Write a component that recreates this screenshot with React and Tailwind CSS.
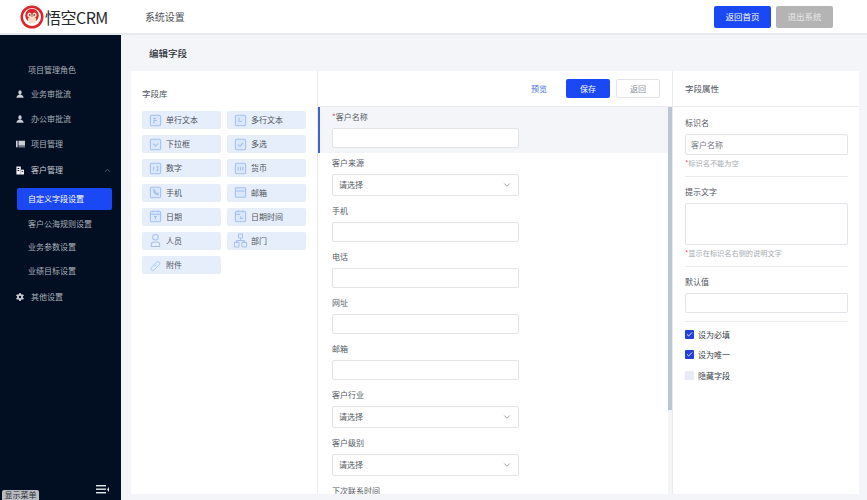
import React from "react";
import { ChevronDown, ChevronUp, Check } from "lucide-react";

const font = { fontFamily: '"Noto Sans CJK SC", "Noto Sans", sans-serif' };

// small pale-blue field type icons
const FieldIcon = ({ type }) => {
  const c = "#a3c0ee";
  const box = <rect x="2.500" y="2.500" width="11" height="11" rx="1.500" fill="#dbe7fa" />;
  const shapes = {
    text: <>{box}<path d="M5.500 6h3M5.500 8h4M5.500 10h2" /></>,
    multi: <>{box}<path d="M6.500 5v4h3" /></>,
    select: <>{box}<path d="M5.500 7l2.500 2.500L10.500 7" /></>,
    check: <>{box}<path d="M5.500 8l2 2 3-4" /></>,
    number: <>{box}<path d="M6 6v4M9 6h1.500v4H9" /></>,
    money: <>{box}<path d="M5.500 6v4M8 6v4M10.500 6v4" /></>,
    phone: <>{box}<path d="M6 5c0 3 2 5 5 5.500l-.5-1.800-1.500.3-1.500-1.500.3-1.500z" /></>,
    mail: <><rect x="2.500" y="3" width="11" height="10" rx="1" fill="#dbe7fa" /><path d="M2.500 6.500h11" /></>,
    date: <>{box}<path d="M2.500 5.500h11M5.500 1.500v2M10.500 1.500v2M6.500 8h3M8 8v3" /></>,
    datetime: <>{box}<path d="M2.500 5.500h5M5.500 1.500v2M10.500 1.500v2M8 8v2h2.500" /></>,
    person: <><circle cx="8" cy="4.500" r="3" /><path d="M3.500 14.500v-2a3 3 0 0 1 3-3h3a3 3 0 0 1 3 3v2z" /></>,
    dept: <><rect x="5.800" y="1" width="4.400" height="4.400" rx="1" /><rect x="1.500" y="10" width="5" height="5" rx="1" /><rect x="9.500" y="10" width="5" height="5" rx="1" /><path d="M8 5.400V8M4 10V8h8v2" /></>,
    attach: <g transform="translate(1.600 1.600) scale(0.8)"><path d="M2.500 10.500l7-7a2.500 2.500 0 0 1 3.500 0 2.500 2.500 0 0 1 0 3.500l-7 7a2 2 0 0 1-3.500-3.500z" /><path d="M6.500 9.500l2.500-2.500" /></g>,
  };
  return (
    <svg width="15" height="15" viewBox="0 0 16 16" fill="none" stroke={c} strokeWidth="1.100" className="shrink-0">
      {shapes[type]}
    </svg>
  );
};

const fieldLib = [
  ["单行文本", "text"],
  ["多行文本", "multi"],
  ["下拉框", "select"],
  ["多选", "check"],
  ["数字", "number"],
  ["货币", "money"],
  ["手机", "phone"],
  ["邮箱", "mail"],
  ["日期", "date"],
  ["日期时间", "datetime"],
  ["人员", "person"],
  ["部门", "dept"],
  ["附件", "attach"],
];

const SideIcon = ({ kind }) => {
  if (kind === "user")
    return (
      <svg width="8" height="8" viewBox="0 0 10 10" fill="#c9ced6">
        <path d="M3 2.500a2 2.300 0 0 1 4 0v1a2 2.300 0 0 1-4 0z" />
        <path d="M3.500 6h3l2.500 1.500V9H1V7.500z" />
        <rect x="0.500" y="9.200" width="9" height="0.800" />
      </svg>
    );
  if (kind === "gear")
    return (
      <svg width="8" height="8" viewBox="0 0 10 10">
        <g fill="#c9ced6">
          <circle cx="5" cy="5" r="3.600" />
          <rect x="4" y="0" width="2" height="10" />
          <rect x="4" y="0" width="2" height="10" transform="rotate(60 5 5)" />
          <rect x="4" y="0" width="2" height="10" transform="rotate(120 5 5)" />
        </g>
        <circle cx="5" cy="5" r="1.500" fill="#020f22" />
      </svg>
    );
  if (kind === "book")
    return (
      <svg width="9" height="8" viewBox="0 0 11 9" fill="#c9ced6">
        <rect x="0" y="0.500" width="2" height="8" />
        <rect x="3" y="0.500" width="8" height="6" />
        <rect x="3" y="7.500" width="8" height="1" />
      </svg>
    );
  return (
    <svg width="8" height="9" viewBox="0 0 10 10" fill="#eef0f3">
      <path d="M0.500 0h5.500v10H0.500z" />
      <path d="M6 4h4v6H6z" />
      <path d="M2 2h2v1H2zM2 4.500h2v1H2zM7 6h2v1H7z" fill="#020f22" />
    </svg>
  );
};

const Label = ({ children, required }) => (
  <div className="text-[8px] leading-[12px] text-[#555b66]">
    {required && <span className="text-[#e0364c]">*</span>}
    {children}
  </div>
);

const FormField = ({ label, select, required, active, className }) => (
  <div className={`${active ? "bg-[#f3f5f9] border-l-2 border-[#3f62d8] pl-[12px] pt-[4px] pb-[5px] mr-[4px]" : "pl-[14px]"} ${className || ""}`}>
    <Label required={required}>{label}</Label>
    <div className={`mt-[5px] w-[187px] ${select ? "h-[22px]" : "h-[20px]"} bg-white border border-[#e2e4e9] rounded-[2px] flex items-center justify-between px-[6px] text-[8px] text-[#555b66]`}>
      {select && <span>请选择</span>}
      {select && <ChevronDown size={10} className="text-[#8a8f99]" />}
    </div>
  </div>
);

export default function App() {
  return (
    <div style={font} className="w-[867px] h-[500px] overflow-hidden flex flex-col bg-[#f3f5f9]">
      {/* top bar */}
      <header className="h-[35px] shrink-0 bg-white border-b-2 border-[#e8e9ec] flex items-center pl-[20px] pr-[34px]">
        <svg width="24" height="24" viewBox="0 0 24 24" className="shrink-0">
          <circle cx="12" cy="12" r="11.500" fill="#d8262c" />
          <circle cx="12" cy="12" r="9" fill="#fff" />
          <circle cx="12" cy="10.500" r="6.800" fill="#d8262c" />
          <ellipse cx="9.500" cy="10" rx="2.200" ry="2.500" fill="#f6dcc6" />
          <ellipse cx="14.500" cy="10" rx="2.200" ry="2.500" fill="#f6dcc6" />
          <ellipse cx="12" cy="15" rx="4.200" ry="3.500" fill="#f6dcc6" />
          <circle cx="9.800" cy="10" r="0.800" fill="#222" />
          <circle cx="14.200" cy="10" r="0.800" fill="#222" />
        </svg>
        <span className="ml-[1px] text-[16px] tracking-[-0.5px] text-[#26282c]">悟空CRM</span>
        <span className="ml-[37px] text-[10px] text-[#50545c]">系统设置</span>
        <button className="ml-auto w-[57px] h-[22px] rounded-[2px] bg-[#1a48f5] text-white text-[8.500px]">返回首页</button>
        <button className="ml-[5px] w-[57px] h-[22px] rounded-[2px] bg-[#b4b4b4] text-[#e6e6e6] text-[8.500px]">退出系统</button>
      </header>

      <div className="flex-1 flex min-h-0">
        {/* sidebar */}
        <aside className="relative w-[121px] shrink-0 bg-[#020f22] text-[8px] text-[#a9afb9] pt-[26px]">
          <div className="pl-[28px] h-[18px] flex items-center">项目管理角色</div>
          <div className="pl-[16px] h-[25px] mt-[2px] flex items-center gap-[7px]"><SideIcon kind="user" /><span>业务审批流</span></div>
          <div className="pl-[16px] h-[25px] flex items-center gap-[7px]"><SideIcon kind="user" /><span>办公审批流</span></div>
          <div className="pl-[16px] h-[26px] flex items-center gap-[6px]"><SideIcon kind="book" /><span>项目管理</span></div>
          <div className="pl-[16px] pr-[9px] h-[26px] flex items-center gap-[7px] text-[#c9ced6]">
            <SideIcon kind="building" /><span>客户管理</span>
            <ChevronUp size={9} className="ml-auto text-[#5d6675]" />
          </div>
          <div className="ml-[17px] mt-[5px] w-[95px] h-[22px] rounded-[2px] bg-[#1a48f5] text-white pl-[11px] flex items-center">自定义字段设置</div>
          <div className="pl-[28px] h-[24px] mt-[2px] flex items-center">客户公海规则设置</div>
          <div className="pl-[28px] h-[22px] flex items-center">业务参数设置</div>
          <div className="pl-[28px] h-[26px] flex items-center">业绩目标设置</div>
          <div className="pl-[16px] h-[25px] flex items-center gap-[7px]"><SideIcon kind="gear" /><span>其他设置</span></div>

          <svg width="14" height="9" viewBox="0 0 14 9" fill="#e6e8ec" className="absolute left-[96px] bottom-[6px]">
            <rect x="0" y="0" width="10" height="1.400" />
            <rect x="0" y="3.500" width="10" height="1.400" />
            <rect x="0" y="7" width="10" height="1.400" />
            <path d="M13 2v5l-2-2.500z" />
          </svg>
          <div className="absolute left-[2px] bottom-0 w-[37px] h-[10px] rounded-t-[2px] bg-[#b9bdc2] text-[#2c2f33] text-[8px] leading-[10px] text-center overflow-hidden">显示菜单</div>
        </aside>

        {/* main area */}
        <main className="flex-1 min-w-0 flex flex-col">
          <div className="h-[36px] shrink-0 pl-[28px] flex items-center text-[9.500px] font-medium text-[#2f333a]">编辑字段</div>
          <div className="ml-[10px] mr-[8px] mb-[6px] flex-1 min-h-0 flex bg-white">
            {/* field library */}
            <section className="w-[187px] shrink-0 border-r border-[#e9ebef] pl-[11px]">
              <div className="mt-[16px] text-[8.500px] leading-[13px] text-[#50545c]">字段库</div>
              <div className="mt-[11px] grid grid-cols-[79px_79px] gap-x-[6px] gap-y-[6.200px]">
                {fieldLib.map(([name, type]) => (
                  <div key={name} className="h-[18px] rounded-[2px] bg-[#e6eefb] pl-[6px] flex items-center gap-[3px] text-[8px] text-[#50545c]">
                    <FieldIcon type={type} />
                    <span>{name}</span>
                  </div>
                ))}
              </div>
            </section>

            {/* form preview */}
            <section className="w-[354px] shrink-0 flex flex-col min-h-0">
              <div className="h-[36px] shrink-0 border-b border-[#e9ebef] flex items-center justify-end pr-[12px]">
                <span className="text-[8px] text-[#4a6fe0]">预览</span>
                <button className="ml-[19px] w-[44px] h-[19px] rounded-[2px] bg-[#1a48f5] text-white text-[8px]">保存</button>
                <button className="ml-[6px] w-[44px] h-[19px] rounded-[2px] border border-[#e2e4e9] bg-white text-[#8a8f99] text-[8px]">返回</button>
              </div>
              <div className="relative flex-1 min-h-0 overflow-hidden">
                <FormField label="客户名称" required active />
                <FormField label="客户来源" select className="mt-[4px]" />
                <FormField label="手机" className="mt-[9px]" />
                <FormField label="电话" className="mt-[9px]" />
                <FormField label="网址" className="mt-[9px]" />
                <FormField label="邮箱" className="mt-[9px]" />
                <FormField label="客户行业" select className="mt-[9px]" />
                <FormField label="客户级别" select className="mt-[9px]" />
                <div className="pl-[14px] mt-[9px]"><Label>下次联系时间</Label></div>
                {/* scrollbar */}
                <div className="absolute right-0 top-0 bottom-0 w-[4px] bg-[#f3f4f6]">
                  <div className="h-[303px] bg-[#bcc6d2]" />
                </div>
              </div>
            </section>

            {/* field props */}
            <section className="flex-1 min-w-0 border-l border-[#e9ebef] flex flex-col">
              <div className="h-[36px] shrink-0 border-b border-[#e9ebef] pl-[12px] flex items-center text-[8.500px] text-[#50545c]">字段属性</div>
              <div className="pl-[12px] pr-[11px] pt-[10px] text-[8px] text-[#50545c]">
                <div className="leading-[12px]">标识名</div>
                <div className="mt-[5px] h-[21px] border border-[#e2e4e9] rounded-[2px] pl-[5px] flex items-center text-[#777c85]">客户名称</div>
                <div className="mt-[3px] text-[7.200px] leading-[11px] text-[#a5a9b0]"><span className="text-[#e0364c]">*</span>标识名不能为空</div>
                <div className="mt-[7px] h-px bg-[#e9ebef]" />
                <div className="mt-[9px] leading-[12px]">提示文字</div>
                <div className="mt-[5px] h-[42px] border border-[#e2e4e9] rounded-[2px]" />
                <div className="mt-[3px] text-[7.200px] leading-[11px] text-[#a5a9b0]"><span className="text-[#e0364c]">*</span>显示在标识名右侧的说明文字</div>
                <div className="mt-[7px] h-px bg-[#e9ebef]" />
                <div className="mt-[9px] leading-[12px]">默认值</div>
                <div className="mt-[5px] h-[20px] border border-[#e2e4e9] rounded-[2px]" />
                <div className="mt-[8px] h-px bg-[#e9ebef]" />
                <div className="mt-[8px] h-[9px] flex items-center gap-[4px] text-[#3a3e45]">
                  <span className="w-[9px] h-[9px] rounded-[1px] bg-[#2340d8] flex items-center justify-center"><Check size={7} color="#fff" strokeWidth={3} /></span>
                  <span>设为必填</span>
                </div>
                <div className="mt-[11px] h-[9px] flex items-center gap-[4px] text-[#3a3e45]">
                  <span className="w-[9px] h-[9px] rounded-[1px] bg-[#2340d8] flex items-center justify-center"><Check size={7} color="#fff" strokeWidth={3} /></span>
                  <span>设为唯一</span>
                </div>
                <div className="mt-[12px] h-[9px] flex items-center gap-[4px] text-[#3a3e45]">
                  <span className="w-[9px] h-[9px] rounded-[1px] bg-[#e8ebf3]" />
                  <span>隐藏字段</span>
                </div>
              </div>
            </section>
          </div>
        </main>
      </div>
    </div>
  );
}
